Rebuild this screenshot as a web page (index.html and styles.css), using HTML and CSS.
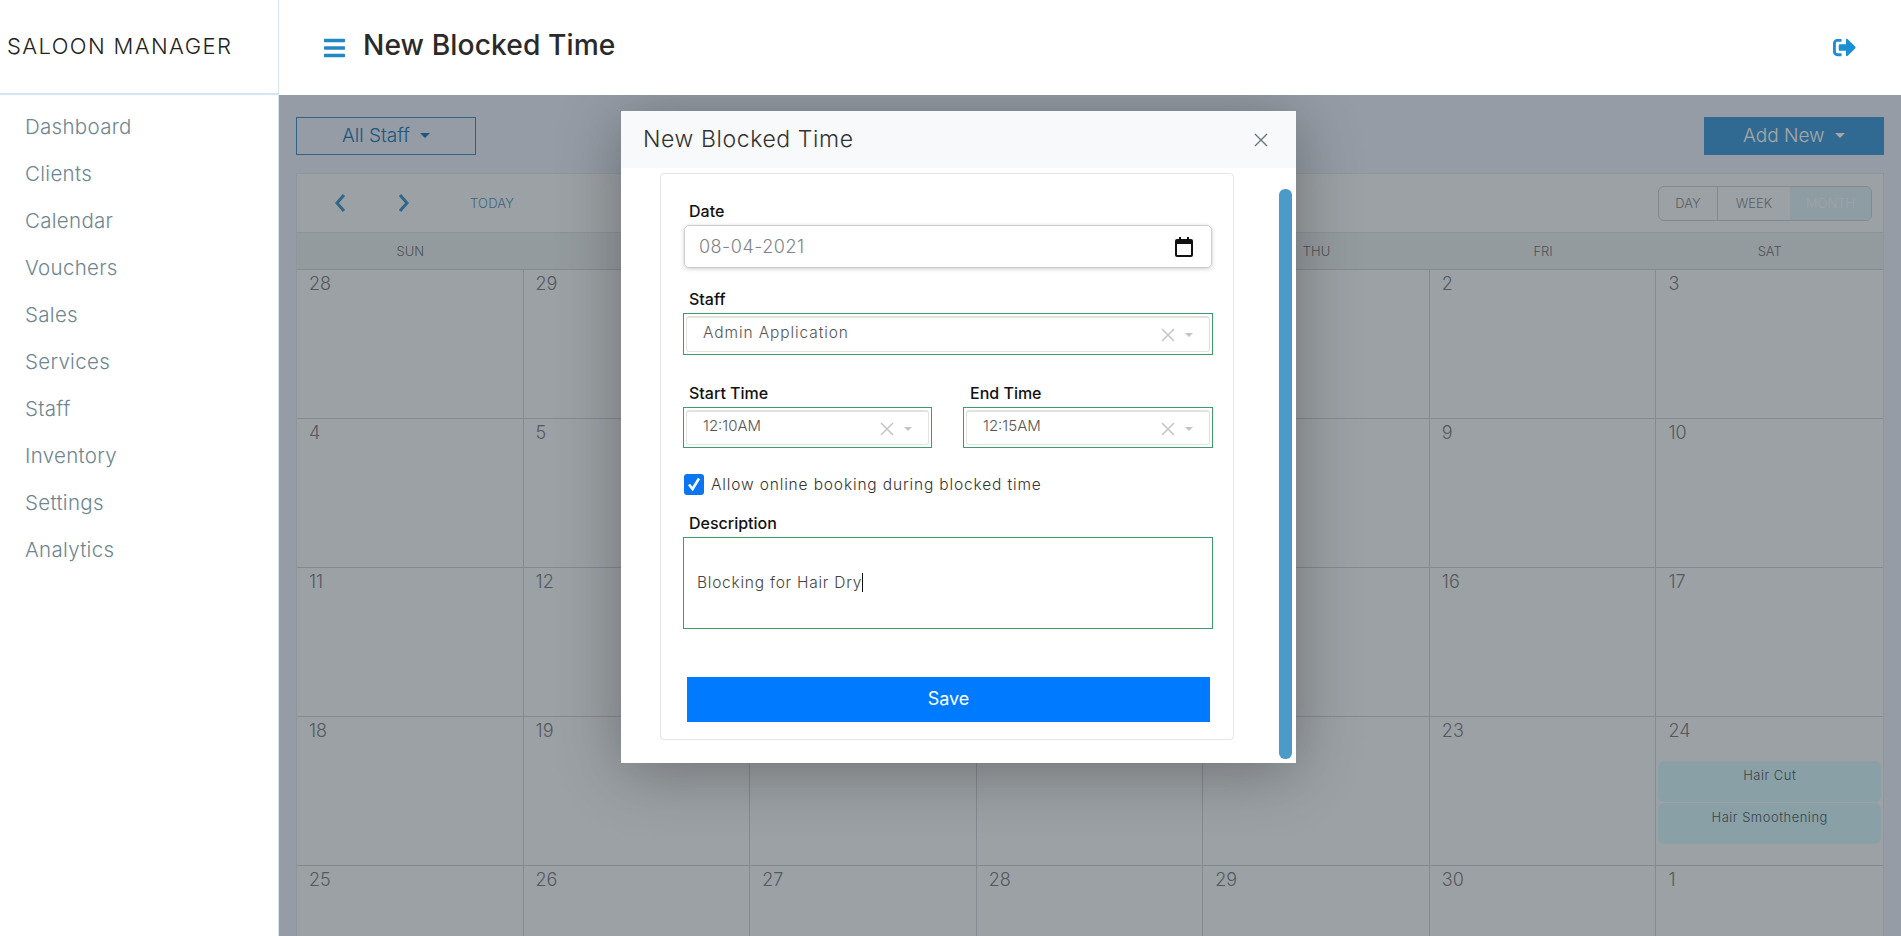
FILE: index.html
```html
<!DOCTYPE html>
<html lang="en">
<head>
    <meta charset="UTF-8">
    <meta name="viewport" content="width=device-width, initial-scale=1.0">
    <title>New Blocked Time</title>
    <link rel="stylesheet" href="styles.css">
</head>
<body>
    <div class="app">
        <!-- Sidebar -->
        <aside class="sidebar">
            <div class="brand">SALOON MANAGER</div>
            <nav class="side-nav">
                <a>Dashboard</a>
                <a>Clients</a>
                <a>Calendar</a>
                <a>Vouchers</a>
                <a>Sales</a>
                <a>Services</a>
                <a>Staff</a>
                <a>Inventory</a>
                <a>Settings</a>
                <a>Analytics</a>
            </nav>
        </aside>

        <div class="content">
            <!-- Top bar -->
            <header class="topbar">
                <svg class="menu-icon" viewBox="0 0 448 512"><path d="M16 132h416c8.837 0 16-7.163 16-16V76c0-8.837-7.163-16-16-16H16C7.163 60 0 67.163 0 76v40c0 8.837 7.163 16 16 16zm0 160h416c8.837 0 16-7.163 16-16v-40c0-8.837-7.163-16-16-16H16c-8.837 0-16 7.163-16 16v40c0 8.837 7.163 16 16 16zm0 160h416c8.837 0 16-7.163 16-16v-40c0-8.837-7.163-16-16-16H16c-8.837 0-16 7.163-16 16v40c0 8.837 7.163 16 16 16z"/></svg>
                <h1>New Blocked Time</h1>
                <svg class="logout-icon" viewBox="0 0 512 512"><path d="M497 273L329 441c-15 15-41 4.5-41-17v-96H152c-13.3 0-24-10.7-24-24v-96c0-13.3 10.7-24 24-24h136V88c0-21.4 25.9-32 41-17l168 168c9.3 9.4 9.3 24.6 0 34zM192 436v-40c0-6.6-5.4-12-12-12H96c-17.7 0-32-14.3-32-32V160c0-17.7 14.3-32 32-32h84c6.6 0 12-5.4 12-12V76c0-6.6-5.4-12-12-12H96c-53 0-96 43-96 96v192c0 53 43 96 96 96h84c6.6 0 12-5.4 12-12z"/></svg>
            </header>

            <!-- Calendar page, dimmed by the backdrop -->
            <main class="page">
                <div class="page-actions">
                    <button class="btn-outline">All Staff <span class="caret"></span></button>
                    <button class="btn-solid">Add New <span class="caret"></span></button>
                </div>

                <section class="calendar">
                    <div class="cal-toolbar">
                        <svg class="chev chev-prev" viewBox="0 0 12 20"><polyline points="10,2 3,10 10,18"/></svg>
                        <svg class="chev chev-next" viewBox="0 0 12 20"><polyline points="2,2 9,10 2,18"/></svg>
                        <span class="today">TODAY</span>
                        <div class="view-group">
                            <span class="view-day">DAY</span>
                            <span class="view-week">WEEK</span>
                            <span class="view-month">MONTH</span>
                        </div>
                    </div>
                    <div class="cal-head">
                        <div>SUN</div><div>MON</div><div>TUE</div><div>WED</div><div>THU</div><div>FRI</div><div>SAT</div>
                    </div>
                    <div class="cal-grid">
                        <div class="day">28</div><div class="day">29</div><div class="day">30</div><div class="day">31</div><div class="day">1</div><div class="day">2</div><div class="day">3</div>
                        <div class="day">4</div><div class="day">5</div><div class="day">6</div><div class="day">7</div><div class="day">8</div><div class="day">9</div><div class="day">10</div>
                        <div class="day">11</div><div class="day">12</div><div class="day">13</div><div class="day">14</div><div class="day">15</div><div class="day">16</div><div class="day">17</div>
                        <div class="day">18</div><div class="day">19</div><div class="day">20</div><div class="day">21</div><div class="day">22</div><div class="day">23</div>
                        <div class="day">24
                            <div class="event event-first">Hair Cut</div>
                            <div class="event">Hair Smoothening</div>
                        </div>
                        <div class="day">25</div><div class="day">26</div><div class="day">27</div><div class="day">28</div><div class="day">29</div><div class="day">30</div><div class="day">1</div>
                    </div>
                </section>
                <div class="backdrop"></div>
            </main>
        </div>
    </div>

    <!-- Modal -->
    <div class="modal">
        <div class="modal-header">
            <h2>New Blocked Time</h2>
            <svg class="close-icon" viewBox="0 0 14 14"><path d="M1 1L13 13M13 1L1 13"/></svg>
        </div>
        <div class="modal-card">
            <label class="field-label">Date</label>
            <div class="date-input">
                <span>08-04-2021</span>
                <svg class="date-icon" viewBox="0 0 18 20"><path d="M4 0h2v2h6V0h2v2h2a2 2 0 0 1 2 2v14a2 2 0 0 1-2 2H2a2 2 0 0 1-2-2V4a2 2 0 0 1 2-2h2zM2 7v11h14V7z"/></svg>
            </div>

            <label class="field-label staff-label">Staff</label>
            <div class="select-box">
                <div class="select-inner">
                    <span class="staff-value">Admin Application</span>
                    <svg class="clear-icon" viewBox="0 0 14 14"><path d="M1 1L13 13M13 1L1 13"/></svg>
                    <span class="select-caret"></span>
                </div>
            </div>

            <div class="time-row">
                <div class="time-col">
                    <label class="field-label">Start Time</label>
                    <div class="select-box time-box">
                        <div class="select-inner">
                            <span>12:10AM</span>
                            <svg class="clear-icon" viewBox="0 0 14 14"><path d="M1 1L13 13M13 1L1 13"/></svg>
                            <span class="select-caret"></span>
                        </div>
                    </div>
                </div>
                <div class="time-col">
                    <label class="field-label end-label">End Time</label>
                    <div class="select-box time-box">
                        <div class="select-inner">
                            <span>12:15AM</span>
                            <svg class="clear-icon" viewBox="0 0 14 14"><path d="M1 1L13 13M13 1L1 13"/></svg>
                            <span class="select-caret"></span>
                        </div>
                    </div>
                </div>
            </div>

            <div class="check-row">
                <span class="checkbox">
                    <svg viewBox="0 0 20 20"><polyline points="5,10.5 8.6,15 15,4.5"/></svg>
                </span>
                <span>Allow online booking during blocked time</span>
            </div>

            <label class="field-label desc-label">Description</label>
            <div class="desc-box"><span>Blocking for Hair Dry</span><span class="text-cursor"></span></div>

            <button class="save-btn">Save</button>
        </div>
        <div class="modal-scroll"></div>
    </div>
</body>
</html>
```

FILE: styles.css
```css
/* General Styling */
* {
    box-sizing: border-box;
}

body {
    margin: 0;
    height: 936px;
    overflow: hidden;
    font-family: "Inter", "Noto Sans", sans-serif;
    font-weight: 300;
    background: #fff;
    color: #222;
}

.app {
    display: flex;
    height: 936px;
}

/* Sidebar */
.sidebar {
    width: 279px;
    flex-shrink: 0;
    border-right: 1px solid #d6e6ee;
}

.brand {
    height: 95px;
    padding: 0 0 2px 7px;
    display: flex;
    align-items: center;
    border-bottom: 2px solid #d3e5ee;
    font-size: 22px;
    letter-spacing: 1.4px;
    color: #222;
}

.side-nav {
    display: flex;
    flex-direction: column;
    padding: 8px 0 0 25px;
}

.side-nav a {
    height: 47px;
    line-height: 47px;
    font-size: 20.5px;
    letter-spacing: 0.3px;
    color: #6e8591;
}

/* Top bar */
.content {
    flex: 1;
    display: flex;
    flex-direction: column;
    min-width: 0;
}

.topbar {
    position: relative;
    z-index: 2;
    height: 95px;
    flex-shrink: 0;
    display: flex;
    align-items: center;
    padding: 0 45px 0 45px;
    background: #fff;
}

.menu-icon {
    width: 21px;
    height: 24px;
    fill: #2487c2;
}

.topbar h1 {
    margin: 0 0 5px 18px;
    font-size: 28.2px;
    font-weight: 500;
    letter-spacing: 0.1px;
    color: #2a2a2a;
}

.logout-icon {
    width: 23px;
    height: 23px;
    margin-left: auto;
    fill: #1c8ed4;
}

/* Calendar page */
.page {
    position: relative;
    flex: 1;
    overflow: hidden;
    padding: 22px 17px 0 17px;
    background: #e5f0fe;
}

.backdrop {
    position: absolute;
    inset: 0;
    background: rgba(0, 0, 0, 0.35);
}

.page-actions {
    display: flex;
    justify-content: space-between;
    height: 38px;
}

.btn-outline,
.btn-solid {
    width: 180px;
    height: 38px;
    padding-bottom: 3px;
    font-family: inherit;
    font-weight: 300;
    font-size: 19px;
    border-radius: 0;
}

.btn-outline {
    background: transparent;
    border: 1px solid #4a9ad0;
    color: #2e86c1;
}

.btn-solid {
    background: #4aa4e0;
    border: none;
    color: #fff;
}

.caret {
    display: inline-block;
    margin-left: 5px;
    vertical-align: 4px;
    border-top: 5px solid currentColor;
    border-left: 5px solid transparent;
    border-right: 5px solid transparent;
}

.calendar {
    margin-top: 18px;
    border: 1px solid #dce6ee;
    border-bottom: none;
    background: #f0f8fe;
}

.cal-toolbar {
    height: 59px;
    display: flex;
    align-items: center;
    border-bottom: 1px solid #d9e3ea;
}

.chev {
    width: 12px;
    height: 20px;
    fill: none;
    stroke: #4b9fd3;
    stroke-width: 3;
}

.chev-prev {
    margin-left: 37px;
}

.chev-next {
    margin-left: 52px;
}

.today {
    margin-left: 60px;
    font-size: 13px;
    letter-spacing: 0.2px;
    color: #5f9cc4;
}

.view-group {
    margin-left: auto;
    margin-right: 11px;
    display: flex;
    height: 35px;
    width: 214px;
    border: 1px solid #c8d3dc;
    border-radius: 6px;
    overflow: hidden;
    font-size: 13px;
    color: #8b939a;
}

.view-group span {
    display: flex;
    align-items: center;
    justify-content: center;
}

.view-day {
    width: 59px;
    border-right: 1px solid #c8d3dc;
}

.view-week {
    width: 72px;
}

.view-month {
    flex: 1;
    background: #dbf0fc;
    color: #f1f9fd;
}

.cal-head {
    display: grid;
    grid-template-columns: repeat(7, 1fr);
    height: 37px;
    background: #e4eef5;
    border-bottom: 1px solid #ccd6de;
}

.cal-head div {
    text-align: center;
    line-height: 36px;
    font-size: 13px;
    color: #7a8087;
}

.cal-grid {
    display: grid;
    grid-template-columns: repeat(7, 1fr);
    grid-auto-rows: 149px;
}

.day {
    padding: 1px 12px;
    border-right: 1px solid #ccd4dd;
    border-bottom: 1px solid #ccd4dd;
    font-size: 18px;
    line-height: 26px;
    color: #82898f;
}

.day:nth-child(7n) {
    border-right: none;
}

.event {
    margin: 0 -10px 1px -10px;
    height: 41px;
    padding-top: 4px;
    border-radius: 6px;
    background: #d2f6ff;
    text-align: center;
    font-size: 13px;
    line-height: 20px;
    letter-spacing: 0.5px;
    color: #5a6872;
}

.event-first {
    margin-top: 17px;
}

/* Modal */
.modal {
    position: absolute;
    z-index: 1;
    left: 621px;
    top: 111px;
    width: 675px;
    height: 652px;
    background: #fff;
    box-shadow: 0 8px 60px rgba(0, 0, 0, 0.3);
}

.modal-header {
    height: 57px;
    display: flex;
    align-items: center;
    justify-content: space-between;
    padding: 0 28px 2px 22px;
    background: #f8f9fa;
}

.modal-header h2 {
    margin: 0;
    font-size: 23px;
    font-weight: 300;
    letter-spacing: 0.6px;
    color: #333;
}

.close-icon {
    width: 14px;
    height: 14px;
    margin-top: 3px;
    fill: none;
    stroke: #6d757b;
    stroke-width: 1.4;
}

.modal-card {
    display: flex;
    flex-direction: column;
    width: 574px;
    height: 567px;
    margin: 5px 0 0 39px;
    padding: 27px 20px 0 22px;
    border: 1px solid #e3e5e8;
    border-radius: 4px;
}

.field-label {
    display: block;
    height: 20px;
    line-height: 20px;
    margin: 0 0 4px 6px;
    font-size: 16px;
    font-weight: 500;
    color: #111;
}

.end-label {
    margin-left: 7px;
}

.date-input {
    height: 43px;
    margin: 0 1px 0 1px;
    padding: 0 7px 0 14px;
    display: flex;
    align-items: center;
    justify-content: space-between;
    border: 1px solid #ccc;
    border-radius: 5px;
    box-shadow: 0 1px 4px rgba(0, 0, 0, 0.2);
    font-size: 18px;
    letter-spacing: 0.5px;
    color: #808488;
}

.date-icon {
    width: 18px;
    height: 20px;
    margin-right: 11px;
    fill: #111;
}

.staff-label {
    margin-top: 21px;
}

.select-box {
    height: 42px;
    padding: 2px;
    border: 1px solid #3f9b6c;
}

.time-box {
    height: 41px;
}

.select-inner {
    height: 100%;
    display: flex;
    align-items: center;
    padding: 0 16px 5px 16px;
    border: 1px solid #e2e2de;
    border-top-width: 2px;
    border-radius: 3px;
    font-size: 15px;
    color: #555;
}

.staff-value {
    font-size: 15.5px;
    letter-spacing: 0.9px;
}

.clear-icon {
    width: 14px;
    height: 14px;
    margin: 6px 0 0 auto;
    fill: none;
    stroke: #c4c4c4;
    stroke-width: 1.5;
}

.select-caret {
    margin: 6px 0 0 10px;
    border-top: 4px solid #c4c4c4;
    border-left: 4px solid transparent;
    border-right: 4px solid transparent;
}

.time-row {
    display: flex;
    justify-content: space-between;
    margin-top: 28px;
}

.time-col:first-child {
    width: 249px;
}

.time-col:last-child {
    width: 250px;
}

.check-row {
    display: flex;
    align-items: center;
    gap: 7px;
    height: 21px;
    margin: 26px 0 0 1px;
    font-size: 15.5px;
    letter-spacing: 0.85px;
    color: #333;
}

.checkbox {
    width: 20px;
    height: 21px;
    border-radius: 3px;
    background: #0b76ef;
}

.checkbox svg {
    display: block;
    fill: none;
    stroke: #fff;
    stroke-width: 2.6;
}

.desc-label {
    margin-top: 18px;
}

.desc-box {
    height: 92px;
    display: flex;
    align-items: center;
    padding: 0 13px 2px 13px;
    border: 1px solid #3f9b6c;
    font-size: 15.5px;
    letter-spacing: 0.75px;
    color: #444;
}

.text-cursor {
    width: 1px;
    height: 19px;
    background: #111;
}

.save-btn {
    height: 45px;
    margin: 48px 3px 0 4px;
    padding-bottom: 3px;
    border: none;
    background: #007bff;
    color: #fff;
    font-family: inherit;
    font-size: 18px;
    font-weight: 400;
}

.modal-scroll {
    position: absolute;
    left: 658px;
    top: 78px;
    width: 13px;
    height: 570px;
    border-radius: 6px;
    background: #4b9ac7;
}
```
